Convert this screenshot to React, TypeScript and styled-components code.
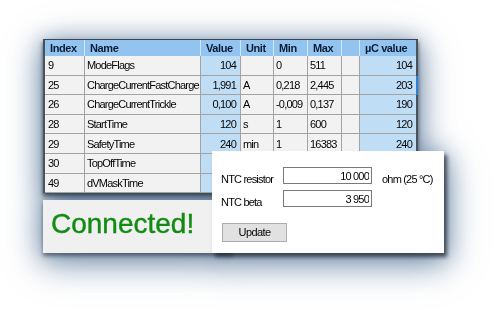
import styled, { createGlobalStyle } from "styled-components";

const GlobalStyle = createGlobalStyle`
  html, body {
    margin: 0;
    padding: 0;
    background: #ffffff;
  }
  body {
    width: 495px;
    height: 310px;
    overflow: hidden;
    font-family: "Liberation Sans", Arial, sans-serif;
  }
`;

type Align = "left" | "right";

interface Column {
  key: string;
  label: string;
  width: number;
  align: Align;
  tinted?: boolean;
}

const columns: Column[] = [
  { key: "index", label: "Index", width: 40, align: "left" },
  { key: "name", label: "Name", width: 116, align: "left" },
  { key: "value", label: "Value", width: 40, align: "right", tinted: true },
  { key: "unit", label: "Unit", width: 33, align: "left" },
  { key: "min", label: "Min", width: 34, align: "left" },
  { key: "max", label: "Max", width: 34, align: "left" },
  { key: "blank", label: "", width: 18, align: "left" },
  { key: "uc", label: "µC value", width: 56, align: "right", tinted: true },
];

const template = columns.map((c) => `${c.width}px`).join(" ");

// the last two rows are partly covered by the NTC dialog
const rows: string[][] = [
  ["9", "ModeFlags", "104", "", "0", "511", "", "104"],
  ["25", "ChargeCurrentFastCharge", "1,991", "A", "0,218", "2,445", "", "203"],
  ["26", "ChargeCurrentTrickle", "0,100", "A", "-0,009", "0,137", "", "190"],
  ["28", "StartTime", "120", "s", "1", "600", "", "120"],
  ["29", "SafetyTime", "240", "min", "1", "16383", "", "240"],
  ["30", "TopOffTime", "", "", "", "", "", ""],
  ["49", "dVMaskTime", "", "", "", "", "", ""],
];

const App: React.FC = () => {
  return (
    <>
      <GlobalStyle />
      <Page>
        <Composite>
          <GridWindow>
            <HeaderRow>
              {columns.map((c) => (
                <HeaderCell key={c.key}>{c.label}</HeaderCell>
              ))}
            </HeaderRow>
            {rows.map((r, i) => (
              <Row key={r[0]} $marked={i === 1}>
                {r.map((text, j) => (
                  <Cell
                    key={columns[j].key}
                    $align={columns[j].align}
                    $tinted={!!columns[j].tinted}
                    $first={j === 0}
                  >
                    {text}
                  </Cell>
                ))}
              </Row>
            ))}
          </GridWindow>

          <StatusPanel>
            <StatusText>Connected!</StatusText>
          </StatusPanel>

          <SettingsDialog>
            <FieldGrid>
              <FieldLabel>NTC resistor</FieldLabel>
              <NumberBox readOnly value="10 000" />
              <UnitLabel>ohm (25 °C)</UnitLabel>
              <FieldLabel>NTC beta</FieldLabel>
              <NumberBox readOnly value="3 950" />
            </FieldGrid>
            <UpdateButton type="button">Update</UpdateButton>
          </SettingsDialog>
        </Composite>
      </Page>
    </>
  );
};

const Page = styled.div`
  padding: 39px 0 0 43px;
`;

const Composite = styled.div`
  position: relative;
  width: 401px;
  display: flex;
  flex-direction: column;
  gap: 7px;
  filter: drop-shadow(0 7px 16px rgba(60, 95, 135, 0.6))
    drop-shadow(0 0 10px rgba(105, 135, 170, 0.5));
`;

const GridWindow = styled.div`
  width: 375px;
  box-sizing: border-box;
  border-top: 1px solid #3d4650;
  border-left: 2px solid #4a535d;
  background: #f2f2f2;
  box-shadow: 0 3px 4px rgba(40, 50, 60, 0.8);
  color: #050505;
`;

const HeaderRow = styled.div`
  display: grid;
  grid-template-columns: ${template};
  height: 16px;
  background: #93c4ef;
  border-right: 2px solid #4a535d;
`;

const HeaderCell = styled.div`
  display: flex;
  align-items: center;
  padding-left: 5px;
  border-right: 1px solid #d4e7f8;
  font-size: 11px;
  font-weight: bold;
  letter-spacing: -0.4px;
  color: #0b1c36;
  white-space: nowrap;
  overflow: hidden;

  &:last-child {
    border-right: none;
  }
`;

const Row = styled.div<{ $marked: boolean }>`
  display: grid;
  grid-template-columns: ${template};
  height: 19.6px;
  border-right: 2px solid ${(p) => (p.$marked ? "#2f7ed8" : "#4a535d")};
`;

const Cell = styled.div<{ $align: Align; $tinted: boolean; $first: boolean }>`
  display: flex;
  align-items: center;
  justify-content: ${(p) => (p.$align === "right" ? "flex-end" : "flex-start")};
  box-sizing: border-box;
  padding: 0 4px 0 ${(p) => (p.$first ? 3 : 2)}px;
  border-right: 1px solid #a3a3a3;
  border-bottom: 1px solid #a3a3a3;
  background: ${(p) => (p.$tinted ? "#c0ddf6" : "#f2f2f2")};
  font-size: 11px;
  letter-spacing: -0.8px;
  white-space: nowrap;
  overflow: hidden;

  &:last-child {
    border-right: none;
  }
`;

const StatusPanel = styled.div`
  width: 190px;
  height: 53px;
  box-sizing: border-box;
  padding: 8px 0 0 8px;
  background: #f0f0f0;
  box-shadow: 0 3px 4px rgba(40, 50, 60, 0.6);
`;

const StatusText = styled.div`
  font-size: 28px;
  line-height: 32px;
  color: #118c11;
  -webkit-text-stroke: 0.4px #118c11;
`;

const SettingsDialog = styled.div`
  position: absolute;
  left: 169px;
  top: 112px;
  width: 232px;
  height: 102px;
  box-sizing: border-box;
  padding: 16px 0 0 9px;
  background: #ffffff;
  box-shadow: 3px 4px 4px rgba(30, 40, 50, 0.75);
  color: #050505;
`;

const FieldGrid = styled.div`
  display: grid;
  grid-template-columns: 62px 89px auto;
  grid-template-rows: 17px 17px;
  row-gap: 6.4px;
  align-items: center;
`;

const FieldLabel = styled.span`
  position: relative;
  top: 4px;
  font-size: 11px;
  line-height: 13px;
  letter-spacing: -0.8px;
  white-space: nowrap;
`;

const UnitLabel = styled(FieldLabel)`
  padding-left: 10px;
`;

const NumberBox = styled.input`
  width: 89px;
  height: 17px;
  box-sizing: border-box;
  margin: 0;
  padding: 0 2px;
  border: 1px solid #7a7a7a;
  background: #ffffff;
  font-family: "Liberation Sans", Arial, sans-serif;
  font-size: 11px;
  letter-spacing: -0.8px;
  color: #050505;
  text-align: right;
  outline: none;
`;

const UpdateButton = styled.button`
  display: block;
  margin: 15.6px 0 0 1px;
  width: 65px;
  height: 19px;
  padding: 0;
  border: 1px solid #adadad;
  background: #e1e1e1;
  font-family: "Liberation Sans", Arial, sans-serif;
  font-size: 11px;
  letter-spacing: -0.6px;
  color: #050505;
`;

export default App;
